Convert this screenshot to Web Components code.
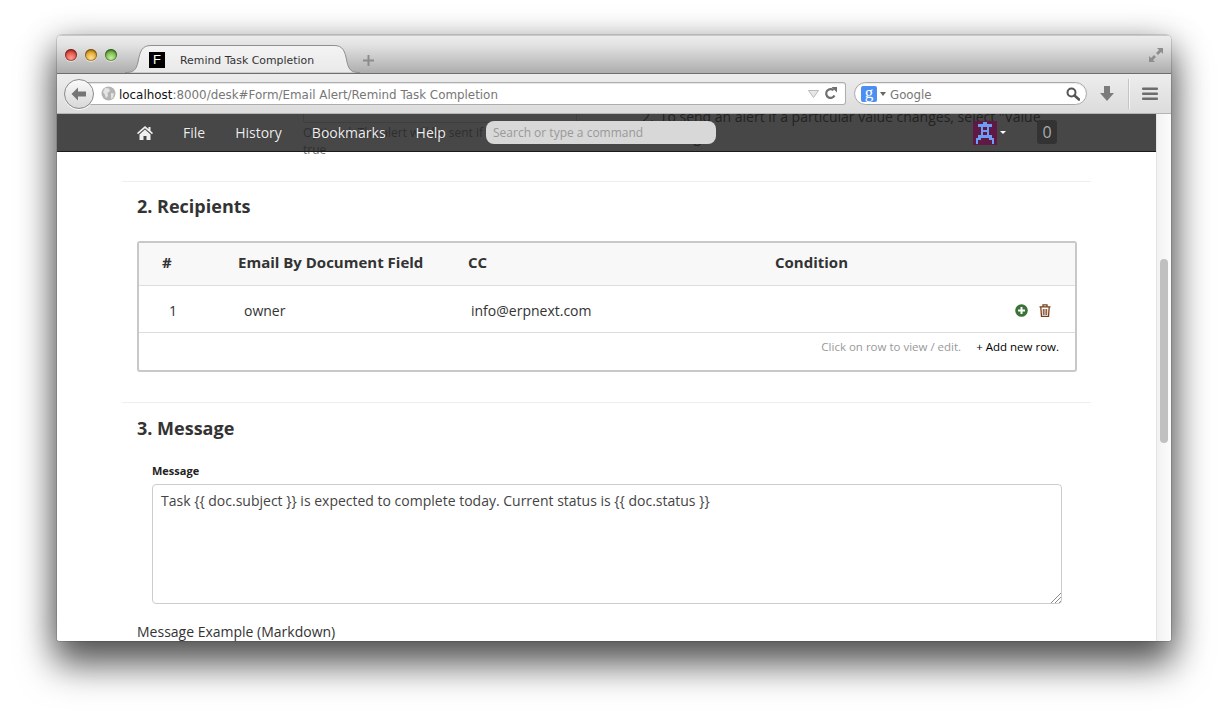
<!DOCTYPE html>
<html lang="en"><head><meta charset="utf-8"><title>Remind Task Completion</title>
<style>
html,body{margin:0;height:720px;overflow:hidden;background:#fff}
body{padding:35px 57px 0;box-sizing:border-box;font-family:"Open Sans",sans-serif}
form-section.r{--pt:12px;--bt:23px}
form-section.m{--pt:13px;--bt:24px}
</style></head><body>
<browser-window>
  <browser-titlebar slot="title" tab="Remind Task Completion"></browser-titlebar>
  <browser-toolbar slot="tools"></browser-toolbar>
  <desk-page slot="page">
    <desk-navbar slot="nav"></desk-navbar>
    <prev-section></prev-section>
    <form-section heading="2. Recipients" class="r"><recipients-grid></recipients-grid></form-section>
    <form-section heading="3. Message" class="m"><message-field></message-field></form-section>
  </desk-page>
</browser-window>
<script>
function def(name,css,html){
  customElements.define(name,class extends HTMLElement{
    constructor(){super();const s=this.attachShadow({mode:'open'});
      s.innerHTML='<style>'+css+'</style>'+(typeof html==='function'?html(this):html);}
  });
}
def('browser-window',`
:host{display:flex;flex-direction:column;width:1114px;height:606px;border-radius:5px 5px 3px 3px;background:#fff;
box-shadow:0 0 0 1px rgba(0,0,0,.12),0 24px 36px 2px rgba(0,0,0,.5),0 8px 34px rgba(0,0,0,.42);overflow:hidden;position:relative}
`,`<slot name="title"></slot><slot name="tools"></slot><slot name="page"></slot>`);

def('browser-titlebar',`
:host{display:flex;flex:none;height:38px;background:linear-gradient(#ececec,#e2e2e2 25%,#adadad);position:relative;align-items:flex-end;border-top:1px solid #c8c8c8;box-sizing:border-box}
.lights{position:absolute;left:8px;top:13px;display:flex;gap:8px}
.l{width:12px;height:12px;border-radius:50%;box-shadow:inset 0 0 0 1px rgba(0,0,0,.3),inset 0 2px 2px rgba(0,0,0,.25),0 1px 0 rgba(255,255,255,.5)}
.r{background:radial-gradient(circle at 50% 75%,#ff9c94,#d8352c 75%)}
.y{background:radial-gradient(circle at 50% 75%,#ffe08a,#d99317 75%)}
.g{background:radial-gradient(circle at 50% 75%,#c8f09a,#5aa534 75%)}
.tab{margin-left:68px;width:235px;height:28px;box-sizing:border-box;padding-top:2px;position:relative;display:flex;align-items:center;flex:none}
.tab svg.bg{position:absolute;left:0;top:0}
.fav{position:relative;margin-left:24px;width:16px;height:16px;background:#000;color:#fff;font:13px/16px "Liberation Sans",sans-serif;text-align:center;flex:none}
.t{position:relative;margin-left:15px;font:10.9px "DejaVu Sans",sans-serif;color:#333;white-space:nowrap}
.plus{margin:0 0 7px 3px;flex:none;display:block}
.exp{position:absolute;right:7px;top:11px}
`,h=>`<div class="lights"><i class="l r"></i><i class="l y"></i><i class="l g"></i></div>
<div class="tab"><svg class="bg" width="235" height="28" viewBox="0 0 235 28"><defs><linearGradient id="tg" x1="0" y1="0" x2="0" y2="1"><stop offset="0" stop-color="#f4f4f4"/><stop offset="1" stop-color="#e9e9e9"/></linearGradient></defs><path d="M0 27.500C9 27.500 11 25 13 17C15 6 17 .5 26 .5H209C218 .5 220 6 222 17C224 25 226 27.500 235 27.500" fill="url(#tg)" stroke="#8f8f8f"/></svg>
<span class="fav">F</span><span class="t">${h.getAttribute('tab')}</span></div>
<svg class="plus" width="11" height="11" viewBox="0 0 11 11"><path d="M5.500 0v11M0 5.500h11" stroke="#8c8c8c" stroke-width="2"/></svg>
<svg class="exp" width="16" height="16" viewBox="0 0 16 16" fill="#8e8e8e"><path d="M9 1h6v6l-2-2-3 3-2-2 3-3zM7 15H1V9l2 2 3-3 2 2-3 3z"/></svg>`);

def('browser-toolbar',`
:host{display:flex;flex:none;align-items:center;height:41px;box-sizing:border-box;border-top:1px solid #6e6e6e;border-bottom:1px solid #b5b5b5;background:linear-gradient(#ededed,#dcdcdc);position:relative;padding-left:7px}
.back{width:30px;height:30px;border-radius:50%;border:1px solid #8a8a8a;background:linear-gradient(#fafafa,#d8d8d8);box-sizing:border-box;flex:none;display:flex;align-items:center;justify-content:center;position:relative;z-index:1;box-shadow:0 1px 0 #fff}
.url{margin-left:-14px;width:766px;box-sizing:border-box;height:23px;padding-left:21px;border:1px solid #adadad;border-left:0;border-radius:0 3px 3px 0;background:#fff;box-shadow:inset 0 1px 1px rgba(0,0,0,.1);display:flex;align-items:center;flex:none;font:11.9px "DejaVu Sans",sans-serif;color:#777;white-space:nowrap}
.url b{font-weight:400;color:#111}
.u{padding-top:2px}
.globe{margin-right:3px;flex:none}
.sp{flex:1}
.tri{margin-right:5px}
.rel{margin-right:8px}
.search{margin-left:8px;width:233px;height:23px;box-sizing:border-box;flex:none;border:1px solid #a8a8a8;border-radius:12px;background:#fff;display:flex;align-items:center;padding:0 6px;font:11.8px "DejaVu Sans",sans-serif;color:#777;box-shadow:inset 0 1px 1px rgba(0,0,0,.08)}
.g{width:16px;height:16px;background:#4d8ff0;color:#fff;border-radius:2px;font:400 17px/14px "Liberation Serif",serif;text-align:center;flex:none}
.c{width:0;height:0;border:3.5px solid transparent;border-top:4px solid #666;border-bottom:0;margin:0 4px 0 3px;flex:none}
.dl{margin-left:13px;flex:none}
.sep{margin-left:14px;width:1px;height:30px;background:#c4c4c4;box-shadow:1px 0 0 #f6f6f6;flex:none}
.menu{margin-left:13px;flex:none}
`,`<div class="back"><svg width="18" height="16" viewBox="0 0 18 16"><path d="M8 1.500L1.500 8 8 14.500V10.500h8v-5H8z" fill="#757575"/></svg></div>
<div class="url"><svg class="globe" width="15" height="15" viewBox="0 0 15 15"><circle cx="7.500" cy="7.500" r="7" fill="#b4b4b4"/><path d="M4 2l4 .5L9 5 6.500 7 7 10 5 12 3.500 8 2 6zM10 7l3 .5-1 4-2 1.500z" fill="#e4e4e4"/></svg><span class="u"><b>localhost</b>:8000/desk#Form/Email Alert/Remind Task Completion</span><span class="sp"></span>
<svg class="tri" width="11" height="8" viewBox="0 0 11 8"><path d="M.5.500h10L5.500 7.500z" fill="#e8e8e8" stroke="#b9b9b9"/></svg>
<svg class="rel" width="13" height="13" viewBox="0 0 13 13"><path d="M10.500 8.500A4.400 4.400 0 1 1 9.500 3.200" fill="none" stroke="#6f6f6f" stroke-width="2.200"/><path d="M7.500 0L13 0v5.600z" fill="#6f6f6f"/></svg></div>
<div class="search"><span class="g">g</span><i class="c"></i><span class="u">Google</span><span class="sp"></span><svg width="14" height="14" viewBox="0 0 14 14"><circle cx="5.500" cy="5.500" r="4" fill="none" stroke="#555" stroke-width="2"/><path d="M8.500 8.500L13 12.500" stroke="#555" stroke-width="2.600" stroke-linecap="round"/></svg></div>
<svg class="dl" width="14" height="15" viewBox="0 0 14 15"><path d="M4 0h6v7h4l-7 8-7-8h4z" fill="#7b7b7b"/></svg>
<i class="sep"></i>
<svg class="menu" width="16" height="14" viewBox="0 0 16 14" fill="#6c6c6c"><rect width="16" height="2.600" rx="1" y=".5"/><rect width="16" height="2.600" rx="1" y="5.500"/><rect width="16" height="2.600" rx="1" y="10.500"/></svg>`);

def('desk-page',`
:host{display:flex;flex:1;min-height:0;position:relative;overflow:hidden;background:#fff}
.main{flex:1;min-width:0;overflow:hidden;position:relative;padding:0 65px;box-sizing:border-box}
.bar{flex:none;width:15px;box-sizing:border-box;border-left:1px solid #e4e4e4;background:linear-gradient(90deg,#f2f2f2,#fcfcfc);padding:145px 3px 0 3px;z-index:2}
.th{height:184px;border-radius:4px;background:#c0c0c0}
`,`<div class="main"><slot name="nav"></slot><slot></slot></div><div class="bar"><div class="th"></div></div>`);

def('desk-navbar',`
:host{display:flex;position:absolute;left:0;right:0;top:0;height:38px;box-sizing:border-box;border-bottom:1px solid #1a1a1a;background:rgba(30,30,30,.82);align-items:center;padding-left:80px;color:#eee;font:14px "Open Sans",sans-serif;z-index:3}
a{color:#eee;white-space:nowrap;text-shadow:0 0 1px rgba(0,0,0,.4)}
.home{display:block;flex:none}
.f{margin-left:30px}.h{margin-left:30px}.b{margin-left:30px}.p{margin-left:30px}
.s{position:absolute;left:429px;top:7px;width:230px;height:23px;border-radius:8px;background:#d8d8d8;color:#999;font-size:12px;line-height:23px;padding-left:7px;box-sizing:border-box}
.a{position:absolute;left:916px;top:7px;display:block}
.car{position:absolute;left:943px;top:17px;width:0;height:0;border:3px solid transparent;border-top:3px solid #fff;border-bottom:0}
.n{position:absolute;left:980px;top:6px;width:20px;height:24px;border-radius:3px;background:#333;color:#aaa;text-align:center;line-height:24px;font-size:16px}
`,`<svg class="home" width="16" height="14" viewBox="0 0 16 14" fill="#f0f0f0"><path d="M8 0L0 7l1 1.200 7-6 7 6L16 7l-2.500-2.200V1h-2v2zM2.500 8.500V14h4v-4h3v4h4V8.500L8 3.500z"/></svg>
<a class="f">File</a><a class="h">History</a><a class="b">Bookmarks</a><a class="p">Help</a>
<div class="s">Search or type a command</div>
<svg class="a" width="24" height="24" viewBox="0 0 24 24" shape-rendering="crispEdges"><rect width="24" height="24" fill="#5e1a45"/><path fill="#6f9df5" d="M10 1h4v2h5v3h-3v3h0v2h0v3h3v3h2v6h-2v-4h-3v-2H8v2H5v4H3v-6h2v-3h3v-3h0V6H5V3h5zM10 6v3h4V6zM10 11v3h4v-3z" fill-rule="evenodd"/></svg>
<i class="car"></i><div class="n">0</div>`);

def('prev-section',`
:host{display:block;height:67px;border-bottom:1px solid #eee;position:relative;overflow:hidden}
.row{display:flex;padding-left:181px}
.l{width:274px;flex:none;font-size:12px;line-height:17px;color:#777}
.box{height:8px;border:1px solid #ccc;border-top:0;border-radius:0 0 3px 3px;margin-bottom:1px}
.x{width:300px}
.r{margin-left:65px;font-size:14px;line-height:20px;color:#333;margin-top:-7px;width:430px;display:flex;gap:6px}
`,`<div class="row"><div class="l"><div class="box"></div><div class="x">Optional: The alert will be sent if this expression is true</div></div>
<div class="r"><span>2.</span><span>To send an alert if a particular value changes, select "Value Change"</span></div></div>`);

def('form-section',`
:host{display:block;color:#333;font:14px "Open Sans",sans-serif}
:host(.m){border-top:1px solid #eee}
h2{margin:0;font-size:18px;font-weight:700;line-height:24px;color:#333;padding:var(--pt) 0 0 15px}
.b{padding:var(--bt) 14px 0 15px}
`,h=>`<h2>${h.getAttribute('heading')}</h2><div class="b"><slot></slot></div>`);

def('recipients-grid',`
:host{display:block;border:2px solid #c8c8c8;border-radius:3px;height:131px;box-sizing:border-box;margin-bottom:30px;color:#333;background:#fff}
.row{display:grid;grid-template-columns:99px 230px 307px 1fr;align-items:center}
.head{height:43px;box-sizing:border-box;padding-bottom:5px;background:#f8f8f8;border-bottom:1px solid #ddd;font-weight:700;font-size:15px;color:#333}
.head span:first-child{padding-left:23px}
.body{height:47px;box-sizing:border-box;padding-top:2px;border-bottom:1px solid #ddd}
.body span:nth-child(1){padding-left:30px}
.body span:nth-child(2){padding-left:6px}
.body span:nth-child(3){padding-left:3px}
.act{display:flex;justify-content:flex-end;gap:11px;padding-right:24px;align-items:center}
.foot{display:flex;justify-content:flex-end;height:27px;box-sizing:border-box;align-items:center;font-size:11.5px;padding-right:16px;gap:15px}
.foot i{font-style:normal;color:#999}.foot b{font-weight:400;color:#000}
`,`<div class="row head"><span>#</span><span>Email By Document Field</span><span>CC</span><span>Condition</span></div>
<div class="row body"><span>1</span><span>owner</span><span>info@erpnext.com</span><div class="act"><svg width="13" height="13" viewBox="0 0 13 13"><circle cx="6.500" cy="6.500" r="6.300" fill="#3b7337"/><path d="M6.500 3v7M3 6.500h7" stroke="#fff" stroke-width="2"/></svg><svg width="12" height="13" viewBox="0 0 12 13" fill="none" stroke="#7a3f18"><path d="M.5 2.800h11M4 2.800V.8h4v2M1.800 3l.7 9.500h7l.7-9.500" stroke-width="1.300"/><path d="M4.300 5v6M6 5v6M7.700 5v6" stroke-width="1"/></svg></div></div>
<div class="foot"><i>Click on row to view / edit.</i><b>+ Add new row.</b></div>`);

def('message-field',`
:host{display:block;margin:-1px 15px 0 15px;color:#333}
label{display:block;font-size:11px;font-weight:700;line-height:15px;color:#222;margin-bottom:6px}
.t{height:120px;box-sizing:border-box;border:1px solid #ccc;border-radius:4px;padding:6px 8px;font-size:14px;line-height:20px;color:#444;position:relative}
.g{position:absolute;right:0;bottom:0;display:block}
.ex{margin:18px 0 0 -15px;font-size:14px;line-height:20px;color:#333}
`,`<label>Message</label><div class="t">Task {{ doc.subject }} is expected to complete today. Current status is {{ doc.status }}<svg class="g" width="11" height="11" viewBox="0 0 11 11" stroke="#8a8a8a"><path d="M1 11L11 1M5 11l6-6M9 11l2-2"/></svg></div><div class="ex">Message Example (Markdown)</div>`);
</script>
</body></html>
